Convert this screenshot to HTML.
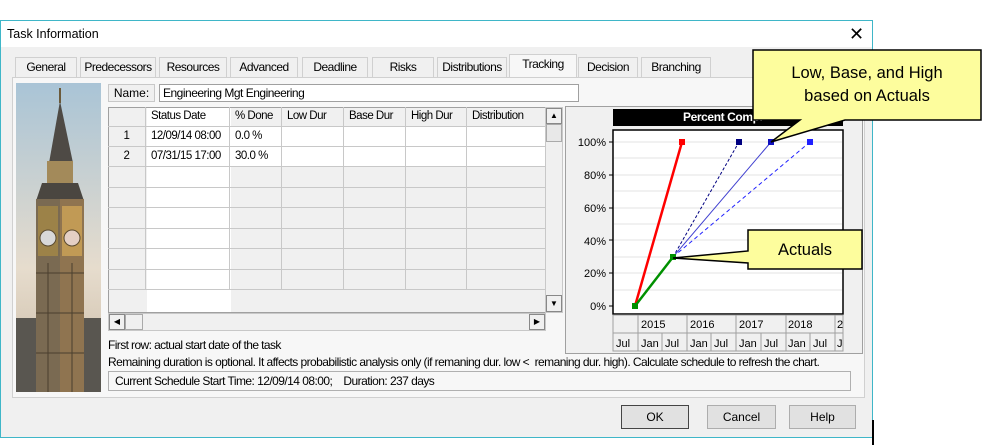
<!DOCTYPE html>
<html><head><meta charset="utf-8"><style>
*{margin:0;padding:0;box-sizing:border-box}
body{width:985px;height:445px;background:#fff;position:relative;overflow:hidden;font-family:"Liberation Sans",Arial,sans-serif;font-size:12px;color:#000}
.a{position:absolute;white-space:nowrap}
.tab{position:absolute;top:57px;height:20px;border:1px solid #d0d0d0;border-bottom:none;background:#f0f0f0;text-align:center;line-height:19px;letter-spacing:-0.5px}
.btn{position:absolute;top:405px;height:24px;border:1px solid #adadad;background:#e1e1e1;text-align:center;line-height:22px}
.cell{position:absolute;border-right:1px solid #c8c8c8;border-bottom:1px solid #c8c8c8;line-height:19px;padding-left:5px;letter-spacing:-0.5px;white-space:nowrap;overflow:hidden;font-size:11.5px}
</style></head><body>
<div class="a" style="left:0;top:20px;width:873px;height:418px;background:#f0f0f0;border:1px solid #3fb6c8"></div>
<div class="a" style="left:1px;top:21px;width:871px;height:26px;background:#fff"></div>
<div class="a" style="left:7px;top:27px;font-size:12.5px">Task Information</div>
<div class="a" style="left:849px;top:24px;font-size:18px">✕</div>
<div class="a" style="left:872px;top:420px;width:2px;height:25px;background:#000"></div>
<div class="tab" style="left:15px;width:62px">General</div>
<div class="tab" style="left:80px;width:76px">Predecessors</div>
<div class="tab" style="left:159px;width:68px">Resources</div>
<div class="tab" style="left:230px;width:68px">Advanced</div>
<div class="tab" style="left:302px;width:66px">Deadline</div>
<div class="tab" style="left:372px;width:62px">Risks</div>
<div class="tab" style="left:437px;width:70px">Distributions</div>
<div class="tab" style="left:509px;width:68px;top:54px;height:24px;background:#f7f7f7">Tracking</div>
<div class="tab" style="left:578px;width:60px">Decision</div>
<div class="tab" style="left:641px;width:70px">Branching</div>
<div class="a" style="left:12px;top:77px;width:853px;height:321px;border:1px solid #d0d0d0;background:#f7f7f7"></div>
<svg class="a" style="left:16px;top:83px" width="85" height="309">
<defs><linearGradient id="sky" x1="0" y1="0" x2="0" y2="1"><stop offset="0" stop-color="#a9c4d6"/><stop offset="0.6" stop-color="#e6dccd"/><stop offset="1" stop-color="#c9b9a3"/></linearGradient></defs>
<rect width="85" height="309" fill="url(#sky)"/>
<rect x="0" y="235" width="85" height="74" fill="#595650"/>
<polygon points="44,18 33,80 57,80" fill="#4e4a45"/>
<rect x="43" y="5" width="2" height="15" fill="#6b5a3a"/>
<rect x="31" y="78" width="26" height="22" fill="#a38a5a"/>
<polygon points="26,100 62,100 68,118 20,118" fill="#4a4640"/>
<rect x="20" y="116" width="48" height="193" fill="#7a6a52"/>
<rect x="44" y="116" width="24" height="193" fill="#8f7450"/>
<rect x="22" y="123" width="20" height="50" fill="#9c8248"/>
<rect x="46" y="123" width="20" height="50" fill="#c19a55"/>
<circle cx="32" cy="155" r="8" fill="#d8d8d8" stroke="#5a4a30"/>
<circle cx="56" cy="155" r="8" fill="#e4cfc5" stroke="#5a4a30"/>
<g stroke="#4a3e2e" stroke-width="1"><line x1="20" y1="190" x2="68" y2="190"/><line x1="20" y1="230" x2="68" y2="230"/><line x1="20" y1="270" x2="68" y2="270"/><line x1="32" y1="180" x2="32" y2="309"/><line x1="56" y1="180" x2="56" y2="309"/></g>
</svg>
<div class="a" style="left:108px;top:84px;width:47px;height:18px;border:1px solid #c8c8c8;background:#f0f0f0;text-align:center;line-height:16px">Name:</div>
<div class="a" style="left:159px;top:84px;width:420px;height:18px;border:1px solid #a0a0a0;background:#fff;line-height:16px;padding-left:3px;letter-spacing:-0.5px">Engineering Mgt Engineering</div>
<div class="a" style="left:108px;top:107px;width:438px;height:206px;background:#f0f0f0;border:1px solid #a0a0a0;overflow:hidden">
<div class="a" style="left:38px;top:0;width:84px;height:206px;background:#fff"></div>
<div class="a" style="left:122px;top:19px;width:320px;height:40px;background:#fff"></div>
</div>
<div id="g"></div>
<div class="a" style="left:545px;top:107px;width:18px;height:206px;background:#f0f0f0;border:1px solid #c8c8c8"></div>
<div class="a" style="left:546px;top:108px;width:16px;height:16px;border:1px solid #888;background:#f0f0f0;font-size:8px;text-align:center;line-height:14px">▲</div>
<div class="a" style="left:546px;top:124px;width:16px;height:18px;border:1px solid #aaa;background:#e8e8e8"></div>
<div class="a" style="left:546px;top:295px;width:16px;height:17px;border:1px solid #888;background:#f0f0f0;font-size:8px;text-align:center;line-height:15px">▼</div>
<div class="a" style="left:108px;top:313px;width:438px;height:18px;background:#f0f0f0;border:1px solid #c8c8c8"></div>
<div class="a" style="left:109px;top:314px;width:16px;height:16px;border:1px solid #888;font-size:8px;text-align:center;line-height:14px">◀</div>
<div class="a" style="left:125px;top:314px;width:18px;height:16px;border:1px solid #aaa"></div>
<div class="a" style="left:529px;top:314px;width:16px;height:16px;border:1px solid #888;font-size:8px;text-align:center;line-height:14px">▶</div>
<div class="a" style="left:565px;top:106px;width:298px;height:248px;border:1px solid #a0a0a0;background:#f0f0f0"></div>
<div class="a" style="left:613px;top:109px;width:230px;height:17px;background:#000;color:#fff;font-weight:bold;padding-left:70px;line-height:17px;letter-spacing:-0.4px">Percent Compl</div>
<svg class="a" style="left:565px;top:128px" width="298" height="226" font-family="Liberation Sans,Arial,sans-serif" font-size="11">
<rect x="48" y="2" width="230" height="184" fill="#fff" stroke="#000" stroke-width="1.5"/>
<g stroke="#e3e3e3"><line x1="49" y1="14" x2="277" y2="14"/><line x1="49" y1="30" x2="277" y2="30"/><line x1="49" y1="47" x2="277" y2="47"/><line x1="49" y1="63" x2="277" y2="63"/><line x1="49" y1="80" x2="277" y2="80"/><line x1="49" y1="96" x2="277" y2="96"/><line x1="49" y1="112" x2="277" y2="112"/><line x1="49" y1="129" x2="277" y2="129"/><line x1="49" y1="145" x2="277" y2="145"/><line x1="49" y1="162" x2="277" y2="162"/></g>
<g stroke="#000"><line x1="44" y1="14" x2="48" y2="14"/><line x1="44" y1="47" x2="48" y2="47"/><line x1="44" y1="80" x2="48" y2="80"/><line x1="44" y1="112" x2="48" y2="112"/><line x1="44" y1="145" x2="48" y2="145"/><line x1="44" y1="178" x2="48" y2="178"/></g>
<g text-anchor="end"><text x="41" y="18">100%</text><text x="41" y="51">80%</text><text x="41" y="84">60%</text><text x="41" y="117">40%</text><text x="41" y="149">20%</text><text x="41" y="182">0%</text></g>
<line x1="70" y1="178" x2="117" y2="14" stroke="#f00" stroke-width="2.5"/>
<line x1="108" y1="129" x2="174" y2="14" stroke="#000080" stroke-dasharray="3,2"/>
<line x1="108" y1="129" x2="206" y2="14" stroke="#4040d0"/>
<line x1="108" y1="129" x2="245" y2="14" stroke="#2020ff" stroke-dasharray="4,3"/>
<line x1="70" y1="178" x2="108" y2="129" stroke="#009000" stroke-width="2.5"/>
<rect x="114" y="11" width="6" height="6" fill="#f00"/><rect x="171" y="11" width="6" height="6" fill="#000080"/><rect x="203" y="11" width="6" height="6" fill="#1010c0"/><rect x="242" y="11" width="6" height="6" fill="#2020ff"/>
<rect x="67" y="175" width="6" height="6" fill="#009000"/><rect x="105" y="126" width="6" height="6" fill="#009000"/>
<g fill="#f0f0f0" stroke="#a0a0a0"><rect x="48" y="187" width="230" height="36"/></g>
<g stroke="#a0a0a0"><line x1="48" y1="205" x2="278" y2="205"/><line x1="73" y1="187" x2="73" y2="223"/><line x1="122" y1="187" x2="122" y2="223"/><line x1="171" y1="187" x2="171" y2="223"/><line x1="221" y1="187" x2="221" y2="223"/><line x1="270" y1="187" x2="270" y2="223"/><line x1="97" y1="205" x2="97" y2="223"/><line x1="146" y1="205" x2="146" y2="223"/><line x1="196" y1="205" x2="196" y2="223"/><line x1="245" y1="205" x2="245" y2="223"/></g>
<g><text x="76" y="200">2015</text><text x="125" y="200">2016</text><text x="174" y="200">2017</text><text x="223" y="200">2018</text><text x="272" y="200">2</text>
<text x="51" y="219">Jul</text><text x="76" y="219">Jan</text><text x="100" y="219">Jul</text><text x="125" y="219">Jan</text><text x="149" y="219">Jul</text><text x="174" y="219">Jan</text><text x="199" y="219">Jul</text><text x="223" y="219">Jan</text><text x="248" y="219">Jul</text><text x="272" y="219">J</text></g>
</svg>
<div class="a" style="left:108px;top:338px;letter-spacing:-0.6px">First row: actual start date of the task</div>
<div class="a" style="left:108px;top:355px;letter-spacing:-0.56px">Remaining duration is optional. It affects probabilistic analysis only (if remaning dur. low &lt;&nbsp; remaning dur. high). Calculate schedule to refresh the chart.</div>
<div class="a" style="left:108px;top:371px;width:743px;height:20px;border:1px solid #b0b0b0;line-height:18px;padding-left:6px;letter-spacing:-0.55px">Current Schedule Start Time: 12/09/14 08:00;&nbsp;&nbsp;&nbsp; Duration: 237 days</div>
<div class="btn" style="left:621px;width:68px;border:1px solid #444">OK</div>
<div class="btn" style="left:707px;width:69px">Cancel</div>
<div class="btn" style="left:789px;width:67px">Help</div>
<svg class="a" style="left:0;top:0" width="985" height="445">
<polygon points="753,50 981,50 981,120 845,120 771,142 800,120 753,120" fill="#fdfd9d" stroke="#000" stroke-width="1.5"/>
<polygon points="748,230 862,230 862,269 748,269 748,263 673,258 748,251" fill="#fdfd9d" stroke="#000" stroke-width="1.5"/>
<g font-family="Liberation Sans,Arial,sans-serif" font-size="16.5" text-anchor="middle"><text x="867" y="78">Low, Base, and High</text><text x="867" y="101">based on Actuals</text><text x="805" y="255">Actuals</text></g>
</svg>
<script>
var cols=[[108,38],[146,84],[230,52],[282,62],[344,62],[406,61],[467,79]];
var h='';var hd=['','Status Date','% Done','Low Dur','Base Dur','High Dur','Distribution'];
var rows=[hd,['1','12/09/14 08:00','0.0 %','','','',''],['2','07/31/15 17:00','30.0 %','','','','']];
var ys=[107,127,147,167,188,208,229,249,270,290];
for(var r=0;r<9;r++){for(var c=0;c<7;c++){var x=cols[c][0],w=cols[c][1];var t=rows[r]?rows[r][c]:'';var st='left:'+x+'px;top:'+ys[r]+'px;width:'+w+'px;height:'+(ys[r+1]-ys[r])+'px;';if(c==0)st+='text-align:center;padding-left:0;';h+='<div class="cell" style="'+st+'">'+t+'</div>';}}
document.getElementById('g').innerHTML=h;
</script>
</body></html>
